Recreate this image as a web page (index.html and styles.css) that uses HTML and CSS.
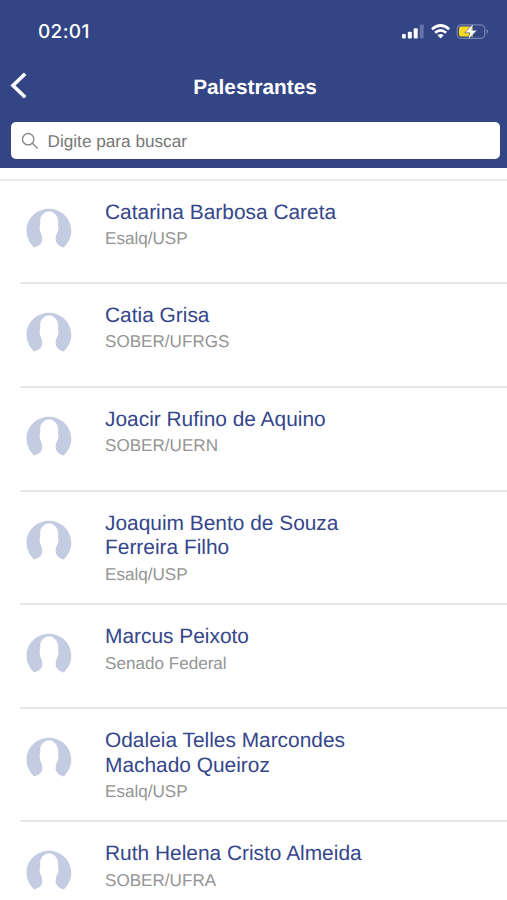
FILE: index.html
```html
<!DOCTYPE html>
<html lang="pt-BR">
<head>
<meta charset="utf-8">
<title>Palestrantes</title>
<link rel="stylesheet" href="styles.css">
</head>
<body>
<svg class="defs" aria-hidden="true">
  <symbol id="avatar" viewBox="0 0 46 44">
    <path d="M8 39.500C3.500 35 .5 29 .5 23C.5 10.500 10.500 .8 22.900 .8S45.300 10.500 45.300 23C45.300 29 42.300 35 37.800 39.500C35.500 38.700 33 38 32 36.500C30 34.500 29.400 32.500 29.700 30C30 27.800 30.200 26.500 31 25.200C32.200 22.500 33.300 20 32 17.500C32.800 12 31.500 7.500 28 5.200C26.800 4.300 25.500 3.200 24 3.200C20 3 15 6 14.200 11.500C14 14 14.600 15 14 17C13.200 20 14 23 15 25.200C15.800 27 16.200 29 16.300 31C16.300 34 15 36 12.800 37.500C11.500 38.500 9.500 38.700 8 39.500Z"/>
  </symbol>
</svg>
<header class="top">
  <div class="status">
    <span class="time">02:01</span>
    <svg class="indicators" width="90" height="20" viewBox="0 0 90 20">
      <g fill="#fff">
        <rect x="2" y="13" width="3.800" height="4.500" rx="1"/>
        <rect x="7.800" y="10.800" width="4" height="6.700" rx="1"/>
        <rect x="13.700" y="7.200" width="4" height="10.300" rx="1"/>
        <rect x="19.700" y="3.500" width="4" height="14" rx="1" opacity=".25"/>
      </g>
      <g fill="none" stroke="#fff" stroke-width="2.700">
        <path d="M32 8.200Q40.600 .8 49.200 8.200"/>
        <path d="M35.100 11.800Q40.600 7 46.100 11.800"/>
      </g>
      <path fill="#fff" d="M37.500 14.200Q40.600 11.600 43.700 14.200L40.600 17.500Z"/>
      <rect x="57.200" y="3.800" width="27.500" height="13.600" rx="4" fill="none" stroke="#7582b0" stroke-width="1.200"/>
      <path d="M86.500 8.300Q90 10.500 86.500 12.800Z" fill="#7582b0"/>
      <path d="M61 5.600H73V15.600H61Q59 15.600 59 13.600V7.600Q59 5.600 61 5.600Z" fill="#f8d91c"/>
      <path d="M73.600 2.300L64.800 11.800H70L67.600 19L77.200 9.200H71.800Z" fill="#fff" stroke="#334584" stroke-width=".6"/>
    </svg>
  </div>
  <div class="navbar">
    <svg class="back" width="18" height="28" viewBox="0 0 18 28"><path d="M15.200 2.800L3 14.500L15.200 26.200" fill="none" stroke="#fff" stroke-width="3.600"/></svg>
    <h1>Palestrantes</h1>
  </div>
  <div class="search">
    <svg width="18" height="18" viewBox="0 0 18 18"><g fill="none" stroke="#858585" stroke-width="1.300"><circle cx="7.200" cy="7.200" r="5.700"/><path d="M11.300 11.300L16.700 16.500"/></g></svg>
    <span>Digite para buscar</span>
  </div>
</header>
<main class="list">
  <article class="row"><svg class="avatar"><use href="#avatar"/></svg><div class="info"><h2>Catarina Barbosa Careta</h2><p>Esalq/USP</p></div></article>
  <article class="row"><svg class="avatar"><use href="#avatar"/></svg><div class="info"><h2>Catia Grisa</h2><p>SOBER/UFRGS</p></div></article>
  <article class="row"><svg class="avatar"><use href="#avatar"/></svg><div class="info"><h2>Joacir Rufino de Aquino</h2><p>SOBER/UERN</p></div></article>
  <article class="row"><svg class="avatar"><use href="#avatar"/></svg><div class="info"><h2>Joaquim Bento de Souza<br>Ferreira Filho</h2><p>Esalq/USP</p></div></article>
  <article class="row"><svg class="avatar"><use href="#avatar"/></svg><div class="info"><h2>Marcus Peixoto</h2><p>Senado Federal</p></div></article>
  <article class="row"><svg class="avatar"><use href="#avatar"/></svg><div class="info"><h2>Odaleia Telles Marcondes<br>Machado Queiroz</h2><p>Esalq/USP</p></div></article>
  <article class="row"><svg class="avatar"><use href="#avatar"/></svg><div class="info"><h2>Ruth Helena Cristo Almeida</h2><p>SOBER/UFRA</p></div></article>
</main>
</body>
</html>
```
FILE: styles.css
```css
* { box-sizing: border-box; }
html, body { height: 900px; overflow: hidden; }
body { margin: 0; background: #fff; font-family: "Liberation Sans", Arial, sans-serif; text-rendering: geometricPrecision; }
h1, h2, p { margin: 0; }
.defs { display: none; }
.top { height: 168px; background: #334584; display: flex; flex-direction: column; }
.status { height: 64px; padding: 21px 17px 0 38px; display: flex; justify-content: space-between; align-items: flex-start; }
.time { font: 500 19px/21px Inter, sans-serif; letter-spacing: .35px; color: #fff; }
.indicators { display: block; }
.navbar { height: 58px; padding: 7px 8px 0 10px; display: grid; grid-template-columns: 18px 1fr 18px; align-items: start; }
.navbar h1 { color: #fff; font-size: 20.8px; line-height: 24px; text-align: center; padding: 5px 0 0 1px; }
.search { height: 37px; margin: 0 7px 0 11px; padding-left: 10px; background: #fff; border-radius: 5px; display: flex; align-items: center; gap: 8.500px; color: #777; font-size: 17.2px; }
.search span { padding-top: 1px; }
.list { margin-top: 11px; border-top: 2px solid #ececee; }
.row { min-height: 104px; margin-left: 20px; padding: 20px 10px 18px 6px; display: flex; align-items: flex-start; border-bottom: 2px solid #e7e7e8; }
.row:first-child { min-height: 102.500px; padding-top: 19.500px; }
.avatar { width: 46px; height: 44px; margin-top: 8px; flex: none; fill: #c4cce1; }
.row:first-child .avatar { margin-top: 7.500px; }
.info { margin-left: 33px; }
.info h2 { font-weight: 400; font-size: 20.9px; line-height: 24.700px; color: #35468b; }
.info p { font-size: 17.100px; line-height: 20px; margin-top: 4px; color: #949494; }
```
